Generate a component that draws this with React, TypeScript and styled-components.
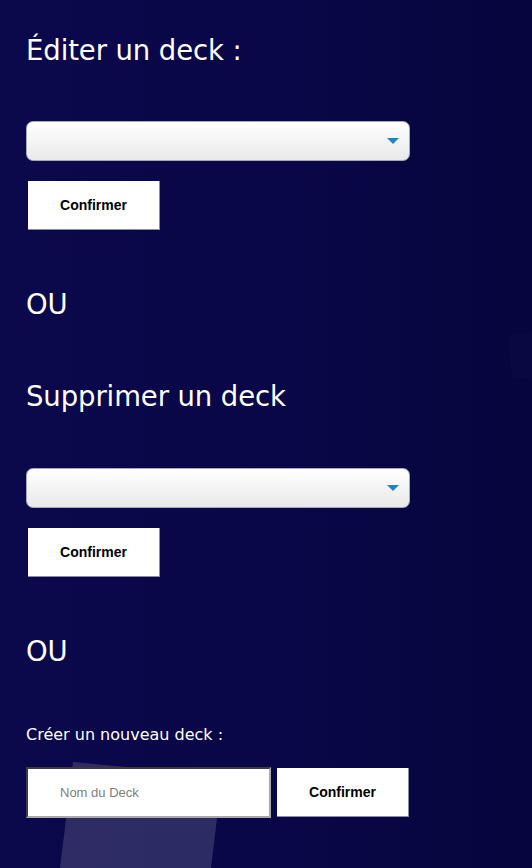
import React from "react";
import styled, { createGlobalStyle } from "styled-components";

const GlobalStyle = createGlobalStyle`
  html, body {
    margin: 0;
    padding: 0;
  }
  body {
    background: linear-gradient(90deg, #0b084c 0%, #090747 55%, #06053d 100%);
    min-height: 868px;
    overflow: hidden;
  }
`;

const Page = styled.div`
  position: relative;
  min-height: 868px;
  padding: 30px 26px 0;
  box-sizing: border-box;
  font-family: "DejaVu Sans", "Noto Sans", sans-serif;
  color: #ffffff;
  overflow: hidden;
`;

const Decor = styled.svg`
  position: absolute;
  left: 0;
  top: 0;
  width: 532px;
  height: 868px;
  pointer-events: none;
  z-index: 0;
`;

const Content = styled.div`
  position: relative;
  z-index: 1;
  display: flex;
  flex-direction: column;
`;

const Title = styled.h2`
  margin: 0;
  font-size: 27.5px;
  font-weight: 400;
  line-height: 40px;
  letter-spacing: -0.1px;
`;

const Or = styled(Title)`
  margin: 0;
`;

const Label = styled.p`
  margin: 0;
  font-size: 16px;
  line-height: 22px;
`;

const Section = styled.div<{ $gap: number }>`
  display: flex;
  flex-direction: column;
  gap: ${(p) => p.$gap}px;
`;

const SelectWrap = styled.div`
  position: relative;
  width: 384px;
  height: 40px;
`;

const Select = styled.select`
  appearance: none;
  width: 100%;
  height: 100%;
  border: 1px solid #a7a7b8;
  border-radius: 7px;
  background: linear-gradient(180deg, #ffffff 0%, #e9e9e9 100%);
  font-family: "Liberation Sans", Arial, sans-serif;
  font-size: 14px;
  padding: 0 12px;
`;

const Caret = styled.svg`
  position: absolute;
  right: 11px;
  top: 17px;
  width: 12px;
  height: 7px;
  pointer-events: none;
`;

const Button = styled.button`
  width: 132px;
  height: 49px;
  margin-left: 2px;
  background: #ffffff;
  border: none;
  border-right: 1px solid #8d8ca8;
  border-bottom: 1px solid #8d8ca8;
  font-family: "Liberation Sans", Arial, sans-serif;
  font-weight: 700;
  font-size: 14px;
  color: #000000;
  cursor: pointer;
`;

const Row = styled.div`
  display: flex;
  align-items: center;
  gap: 6px;
`;

const Input = styled.input`
  width: 245px;
  height: 51px;
  box-sizing: border-box;
  padding: 0 0 0 32px;
  border-top: 2px solid #3c3c3c;
  border-left: 2px solid #3c3c3c;
  border-bottom: 2px solid #a8a8a8;
  border-right: 2px solid #a8a8a8;
  background: #ffffff;
  font-family: "Liberation Sans", Arial, sans-serif;
  font-size: 13px;
  outline: none;
  &::placeholder {
    color: #808080;
  }
`;

const DeckSelect: React.FC = () => (
  <SelectWrap>
    <Select defaultValue="">
      <option value=""></option>
    </Select>
    <Caret viewBox="0 0 12 7">
      <path d="M0 0 H12 L6 6 Z" fill="#1a86c4" />
    </Caret>
  </SelectWrap>
);

export default function App() {
  return (
    <>
      <GlobalStyle />
      <Page>
        <Decor viewBox="0 0 532 868">
          <polygon points="73,762 222,776 211,868 60,868" fill="#ffffff" fillOpacity="0.15" />
          <polygon points="508,336 532,332 532,380 512,378" fill="#ffffff" fillOpacity="0.015" />
        </Decor>
        <Content>
          <Title>Éditer un deck :</Title>
          <Section $gap={20} style={{ marginTop: 51 }}>
            <DeckSelect />
            <Button>Confirmer</Button>
          </Section>
          <Or style={{ marginTop: 54 }}>OU</Or>
          <Title style={{ marginTop: 52 }}>Supprimer un deck</Title>
          <Section $gap={20} style={{ marginTop: 52 }}>
            <DeckSelect />
            <Button>Confirmer</Button>
          </Section>
          <Or style={{ marginTop: 54 }}>OU</Or>
          <Label style={{ marginTop: 53 }}>Créer un nouveau deck :</Label>
          <Row style={{ marginTop: 21 }}>
            <Input placeholder="Nom du Deck" />
            <Button style={{ marginLeft: 0 }}>Confirmer</Button>
          </Row>
        </Content>
      </Page>
    </>
  );
}
